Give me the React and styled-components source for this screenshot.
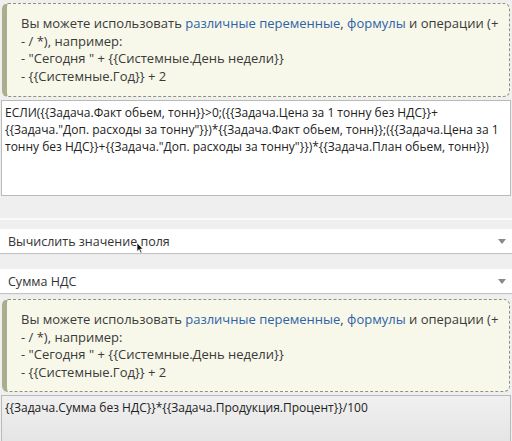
import React from 'react';
import styled, { createGlobalStyle } from 'styled-components';

const Global = createGlobalStyle`
  html, body {
    margin: 0;
    padding: 0;
    background: #efefef;
    font-family: "Open Sans", "Noto Sans", sans-serif;
    color: #333;
  }
`;

const Page = styled.div`
  width: 512px;
  height: 441px;
  overflow: hidden;
  display: flex;
  flex-direction: column;
  padding-top: 3px;
  box-sizing: border-box;
`;

const Hint = styled.div`
  margin: ${p => p.$top || 0}px 2px 0 2px;
  height: ${p => p.$height}px;
  flex-shrink: 0;
  box-sizing: border-box;
  padding: 11px 14px 10px 14px;
  background: #f7f8e9;
  border: 1px dashed #8f937a;
  border-left: 5px solid #a9ae8c;
  border-radius: 6px;
  font-size: 13px;
  line-height: 17.5px;
  color: #3a3a3a;
`;

const Line = styled.div`
  white-space: nowrap;
`;

const Link = styled.span`
  color: #2f62a8;
`;

const Area = styled.div`
  margin: ${p => p.$top}px 1px 0 1px;
  height: ${p => p.$height}px;
  flex-shrink: 0;
  background: ${p => (p.$dim ? 'linear-gradient(#f0f0f0, #e2e2e2)' : '#fff')};
  border: 1px solid #b9b9b9;
  box-sizing: border-box;
  padding: 3px 3px;
  font-size: 12px;
  line-height: 17px;
  color: #222;
`;

const Separator = styled.div`
  margin-top: 22px;
  height: 2px;
  flex-shrink: 0;
  background: #fafafa;
`;

const Select = styled.div`
  margin-top: ${p => p.$top}px;
  height: 24px;
  flex-shrink: 0;
  background: #fff;
  box-shadow: 0 1px 1px rgba(0, 0, 0, 0.18);
  display: flex;
  align-items: center;
  justify-content: space-between;
  padding: 0 6px 0 8px;
  font-size: 12.5px;
  color: #333;
  position: relative;
`;

const Caret = styled.span`
  width: 0;
  height: 0;
  border-left: 4px solid transparent;
  border-right: 4px solid transparent;
  border-top: 5px solid #8a8a8a;
`;

const Pointer = styled.svg`
  position: absolute;
  left: 136px;
  top: 13px;
`;

const HintBlock = () => (
  <>
    <Line>
      Вы можете использовать <Link>различные переменные</Link>, <Link>формулы</Link> и операции (+
    </Line>
    <Line>- / *), например:</Line>
    <Line>- "Сегодня " + {'{{Системные.День недели}}'}</Line>
    <Line>- {'{{Системные.Год}}'} + 2</Line>
  </>
);

export default function App() {
  return (
    <Page>
      <Global />
      <Hint $height={94}>
        <HintBlock />
      </Hint>
      <Area $top={3} $height={96}>
        <Line>{'ЕСЛИ({{Задача.Факт обьем, тонн}}>0;({{Задача.Цена за 1 тонну без НДС}}+'}</Line>
        <Line>{'{{Задача."Доп. расходы за тонну"}})*{{Задача.Факт обьем, тонн}};({{Задача.Цена за 1'}</Line>
        <Line>{'тонну без НДС}}+{{Задача."Доп. расходы за тонну"}})*{{Задача.План обьем, тонн}})'}</Line>
      </Area>
      <Separator />
      <Select $top={9}>
        Вычислить значение поля
        <Caret />
        <Pointer width="8" height="12" viewBox="0 0 9 14">
          <path d="M1 1 L1 11 L3.5 8.8 L5.3 13 L6.8 12.3 L5 8.2 L8.2 8.2 Z" fill="#111" stroke="#fff" strokeWidth="0.8" />
        </Pointer>
      </Select>
      <Select $top={16}>
        Сумма НДС
        <Caret />
      </Select>
      <Hint $top={6} $height={93}>
        <HintBlock />
      </Hint>
      <Area $top={3} $height={60} $dim>
        <Line>{'{{Задача.Сумма без НДС}}*{{Задача.Продукция.Процент}}/100'}</Line>
      </Area>
    </Page>
  );
}
